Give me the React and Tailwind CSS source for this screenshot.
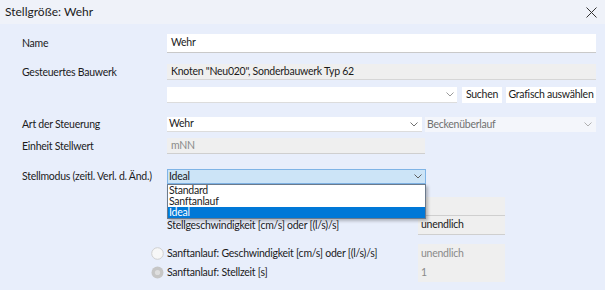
import React from "react";

const Chevron = ({ color = "#606060" }) => (
  <svg width="8" height="5" viewBox="0 0 8 5" className="shrink-0">
    <path d="M0.5 0.5 L4 4 L7.5 0.5" fill="none" stroke={color} strokeWidth="1" />
  </svg>
);

const Label = ({ children }) => (
  <div className="w-[145px] shrink-0 whitespace-nowrap leading-none text-[#1b1b1b]">{children}</div>
);

export default function App() {
  return (
    <div
      className="w-[605px] h-[290px] overflow-hidden bg-[#e8eefb] text-[#1b1b1b] text-[10.5px] tracking-[-0.25px]"
      style={{ fontFamily: 'Lato, "Noto Sans", sans-serif' }}
    >
      {/* Title bar */}
      <div className="h-[24px] bg-[#eff2f9] flex items-center justify-between pl-[5px] pr-[8px] tracking-normal">
        <span className="text-[12px] leading-none text-[#1b1b1b]">Stellgröße: Wehr</span>
        <svg width="11" height="11" viewBox="0 0 11 11">
          <path d="M0.5 0.5 L10.5 10.5 M10.5 0.5 L0.5 10.5" stroke="#333" strokeWidth="1" />
        </svg>
      </div>

      <div className="pl-[22px] pr-[9px]">
        {/* Name */}
        <div className="mt-[10px] flex items-center">
          <Label>Name</Label>
          <div className="flex-1 h-[19px] bg-white border-b border-[#c9c9c9] flex items-center pl-[4px]">
            Wehr
          </div>
        </div>

        {/* Gesteuertes Bauwerk */}
        <div className="mt-[11px] flex items-center">
          <Label>Gesteuertes Bauwerk</Label>
          <div className="flex-1 h-[16px] bg-[#efefef] border-b border-[#d6d6d6] flex items-center pl-[4px] whitespace-nowrap">
            Knoten "Neu020", Sonderbauwerk Typ 62
          </div>
        </div>

        {/* Combo + buttons */}
        <div className="mt-[7px] flex items-center">
          <div className="w-[145px] shrink-0" />
          <div className="w-[290px] h-[16px] bg-white border-b border-[#dcdcdc] flex items-center justify-end pr-[3px]">
            <Chevron color="#9a9a9a" />
          </div>
          <div className="ml-[5px] w-[40px] h-[16px] bg-white flex items-center justify-center whitespace-nowrap">
            Suchen
          </div>
          <div className="ml-[4px] w-[90px] h-[16px] bg-white flex items-center justify-center whitespace-nowrap">
            Grafisch auswählen
          </div>
        </div>

        {/* Art der Steuerung */}
        <div className="mt-[14px] flex items-center">
          <Label>Art der Steuerung</Label>
          <div className="w-[258px] h-[15px] bg-white border-b border-[#dcdcdc] flex items-center justify-between pl-[2px] pr-[4px]">
            <span>Wehr</span>
            <Chevron color="#707070" />
          </div>
          <div className="ml-[3px] w-[171px] h-[15px] bg-[#f4f6fb] flex items-center justify-between pl-[2px] pr-[4px] text-[#707070] shrink-0">
            <span>Beckenüberlauf</span>
            <Chevron color="#b0b0b0" />
          </div>
        </div>

        {/* Einheit Stellwert */}
        <div className="mt-[6px] flex items-center">
          <Label>Einheit Stellwert</Label>
          <div className="w-[258px] h-[16px] bg-[#efefef] border-b border-[#cfcfcf] flex items-center pl-[4px] text-[#8a8a8a]">
            mNN
          </div>
        </div>

        {/* Stellmodus */}
        <div className="mt-[15px] flex items-center">
          <Label>Stellmodus (zeitl. Verl. d. Änd.)</Label>
          <div className="relative w-[259px] h-[15px] bg-[#cce4f7] border border-[#7fb4e6] flex items-center justify-between pl-[1px] pr-[3px]">
            <span>Ideal</span>
            <Chevron color="#606060" />
            <div className="absolute left-[-1px] top-[14px] w-[259px] bg-white border border-[#6b7a8c] shadow-[2px_2px_3px_rgba(0,0,0,0.25)] z-10 leading-[11px]">
              <div className="h-[11px] pl-[1px] overflow-hidden">Standard</div>
              <div className="h-[11px] pl-[1px] overflow-hidden">Sanftanlauf</div>
              <div className="h-[11px] pl-[1px] overflow-hidden bg-[#0078d7] text-white">Ideal</div>
            </div>
          </div>
        </div>

        {/* Lower area */}
        <div className="ml-[129px]">
          <div className="mt-[13px] flex items-center">
            <div className="w-[267px] shrink-0" />
            <div className="w-[87px] h-[19px] bg-[#efefef] border-b border-[#cfcfcf]" />
          </div>
          <div className="flex items-center">
            <div className="w-[267px] shrink-0 pl-[16px] whitespace-nowrap">Stellgeschwindigkeit [cm/s] oder [(l/s)/s]</div>
            <div className="w-[87px] h-[19px] bg-[#efefef] border-b border-[#cfcfcf] flex items-center pl-[3px]">
              unendlich
            </div>
          </div>
          <div className="mt-[9px] flex items-center">
            <div className="w-[267px] shrink-0 flex items-center whitespace-nowrap">
              <svg width="13" height="13" viewBox="0 0 13 13" className="mr-[3px]">
                <circle cx="6.5" cy="6.5" r="5.8" fill="#f7f7f7" stroke="#cfcfcf" strokeWidth="1" />
              </svg>
              <span>Sanftanlauf: Geschwindigkeit [cm/s] oder [(l/s)/s]</span>
            </div>
            <div className="w-[87px] h-[19px] bg-[#efefef] flex items-center pl-[3px] text-[#8a8a8a]">
              unendlich
            </div>
          </div>
          <div className="flex items-center">
            <div className="w-[267px] shrink-0 flex items-center whitespace-nowrap">
              <svg width="13" height="13" viewBox="0 0 13 13" className="mr-[3px]">
                <circle cx="6.5" cy="6.5" r="6" fill="#c6c6c6" />
                <circle cx="6.5" cy="6.5" r="2.6" fill="#dedede" />
              </svg>
              <span>Sanftanlauf: Stellzeit [s]</span>
            </div>
            <div className="w-[87px] h-[19px] bg-[#efefef] flex items-center pl-[3px] text-[#8a8a8a]">
              1
            </div>
          </div>
        </div>
      </div>
    </div>
  );
}
